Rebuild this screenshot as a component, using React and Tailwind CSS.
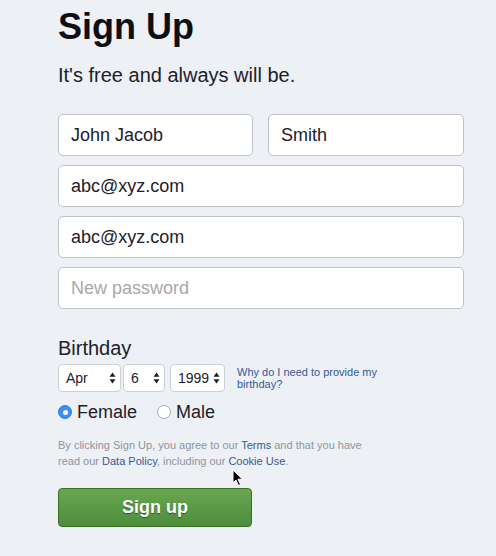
import React from 'react';

const font = { fontFamily: '"Liberation Sans", Arial, sans-serif' };

function TextField({ value, placeholder, className = '' }) {
  return (
    <div
      className={`h-[42px] flex items-center px-[12px] bg-white border border-[#bec3c9] rounded-[5px] text-[18px] leading-[22px] ${className}`}
    >
      {value ? (
        <span className="text-[#1d2129]">{value}</span>
      ) : (
        <span className="text-[#a8a8a8]">{placeholder}</span>
      )}
    </div>
  );
}

function Arrows() {
  return (
    <svg width="7" height="12" viewBox="0 0 7 12" className="shrink-0">
      <path d="M3.5 0.5 L6.5 4.8 L0.5 4.8 Z" fill="#1d2129" />
      <path d="M3.5 11.5 L6.5 7.2 L0.5 7.2 Z" fill="#1d2129" />
    </svg>
  );
}

function Select({ value, className = '' }) {
  return (
    <div
      className={`h-[28px] flex items-center justify-between pl-[7px] pr-[4px] bg-white border border-[#ccd0d5] rounded-[4px] text-[14px] text-[#1d2129] ${className}`}
    >
      <span>{value}</span>
      <Arrows />
    </div>
  );
}

function Radio({ checked, label }) {
  return (
    <div className="flex items-center gap-[5px]">
      {checked ? (
        <span className="w-[14px] h-[14px] rounded-full bg-[#3a8ef6] border border-[#2f7fe4] flex items-center justify-center">
          <span className="w-[5px] h-[5px] rounded-full bg-white" />
        </span>
      ) : (
        <span className="w-[14px] h-[14px] rounded-full bg-white border border-[#a9a9a9]" />
      )}
      <span className="text-[18px] leading-[22px] text-[#1d2129]">{label}</span>
    </div>
  );
}

export default function App() {
  return (
    <div className="relative min-h-screen bg-[#edf0f5]" style={font}>
      <div className="pl-[58px] w-[464px]">
        {/* Heading */}
        <h1 className="pt-[9px] text-[36px] leading-[36px] font-bold text-[#0d0f12]">Sign Up</h1>
        <p className="mt-[18px] text-[20px] leading-[24px] text-[#1d2129]">It's free and always will be.</p>

        {/* Fields */}
        <div className="mt-[27px] flex flex-col gap-[9px]">
          <div className="flex gap-[15px]">
            <TextField value="John Jacob" className="w-[195px]" />
            <TextField value="Smith" className="w-[196px]" />
          </div>
          <TextField value="abc@xyz.com" />
          <TextField value="abc@xyz.com" />
          <TextField placeholder="New password" />
        </div>

        {/* Birthday */}
        <div className="mt-[27px] text-[20px] leading-[24px] text-[#1d2129]">Birthday</div>
        <div className="mt-[4px] flex items-start">
          <Select value="Apr" className="w-[63px]" />
          <Select value="6" className="w-[42px] ml-[2px]" />
          <Select value="1999" className="w-[55px] ml-[5px]" />
          <a className="ml-[12px] mt-[2px] w-[150px] text-[11px] leading-[12px] text-[#365899]">
            Why do I need to provide my birthday?
          </a>
        </div>

        {/* Gender */}
        <div className="mt-[9px] flex items-center gap-[20px]">
          <Radio checked label="Female" />
          <Radio label="Male" />
        </div>

        {/* Legal */}
        <p className="mt-[14px] w-[320px] text-[11px] leading-[16px] text-[#90949c]">
          By clicking Sign Up, you agree to our <span className="text-[#365899]">Terms</span> and that you have
          read our <span className="text-[#365899]">Data Policy</span>, including our{' '}
          <span className="text-[#365899]">Cookie Use</span>.
        </p>

        <button
          className="mt-[19px] w-[194px] h-[39px] rounded-[4px] border border-[#3b6e22] bg-linear-to-b from-[#69a84f] to-[#4c8d3d] text-white text-[18px] font-bold [text-shadow:0_1px_1px_rgba(0,0,0,0.45)]"
        >
          Sign up
        </button>
      </div>

      {/* Mouse cursor */}
      <svg width="12" height="18" viewBox="0 0 12 18" className="absolute left-[232px] top-[469px]">
        <path d="M1 1 L1 14 L4 11 L6.5 16.5 L8.5 15.5 L6 10.2 L10.5 10.2 Z" fill="#000" stroke="#fff" strokeWidth="1" />
      </svg>
    </div>
  );
}
